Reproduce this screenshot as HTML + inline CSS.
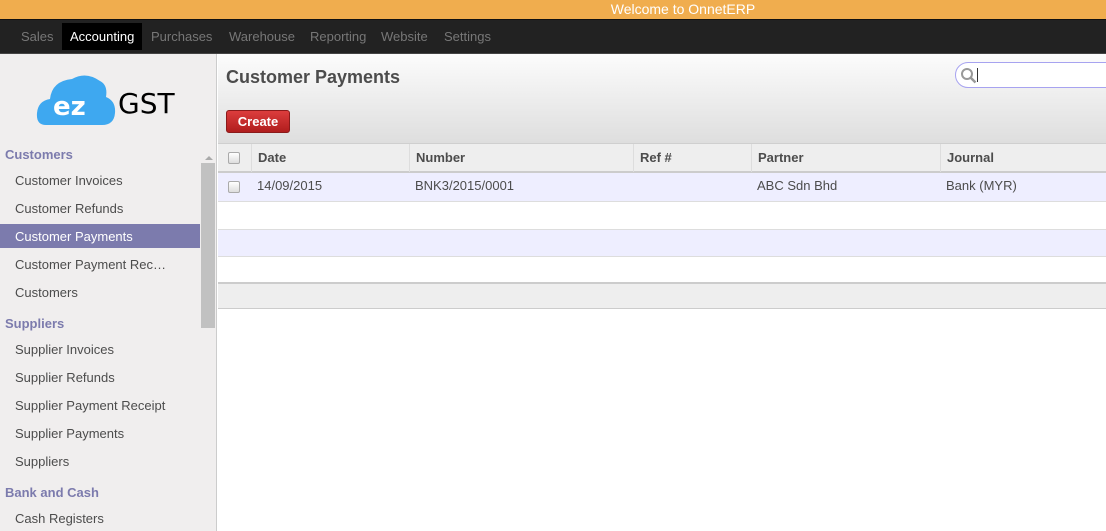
<!DOCTYPE html>
<html><head><style>
*{margin:0;padding:0;box-sizing:border-box}
body{width:1106px;height:531px;overflow:hidden;font-family:"Liberation Sans",Arial,sans-serif;font-size:13px;background:#fff;position:relative}
.top{position:absolute;left:0;top:0;width:1106px;height:20px;background:#f0ad4e;color:#fff;font-size:14px;text-align:center;line-height:19px;padding-left:260px;border-bottom:1px solid #111}
.nav{position:absolute;left:0;top:20px;width:1106px;height:34px;background:#222;border-bottom:1px solid #444}
.nav span{position:absolute;top:3px;height:27px;line-height:27px;color:#777;font-size:13px}
.nav .act{background:#000;color:#fff;padding:0 8px;left:62px}
.side{position:absolute;left:0;top:54px;width:217px;height:477px;background:#f0eeee;border-right:1px solid #ccc}
.side .it{position:absolute;left:15px;color:#4c4c4c;font-size:13px}
.side .h{position:absolute;left:5px;color:#7c7bad;font-weight:bold;font-size:13px}
.sel{position:absolute;left:0;width:200px;height:24px;background:#7c7bad}
.sb{position:absolute;left:201px;top:163px;width:14px;height:165px;background:#c1c1c1}
.hdr{position:absolute;left:218px;top:54px;width:888px;height:90px;background:linear-gradient(#fcfcfc,#dedede);border-bottom:1px solid #cfcfcf}
.hdr h1{position:absolute;left:8px;top:13px;font-size:18px;color:#4c4c4c}
.btn{position:absolute;left:8px;top:56px;width:64px;height:23px;background:linear-gradient(#dc3d3d,#b01d1d);border:1px solid #8a1a1a;border-radius:3px;color:#fff;font-weight:bold;font-size:13px;text-align:center;line-height:21px}
.srch{position:absolute;left:737px;top:8px;width:160px;height:26px;border:1px solid #a7a3f0;border-radius:13px 0 0 13px;background:#fff}
.row{position:absolute;left:218px;width:888px}
.cell{position:absolute;top:0;font-size:13px;color:#4c4c4c}
.cb{position:absolute;left:10px;width:12px;height:12px;border:1px solid #aaa;border-radius:2px;background:linear-gradient(#fff,#ddd)}
.th .cell{font-weight:bold;border-left:1px solid #ddd;height:28px;line-height:28px;padding-left:6px}
</style></head><body>
<div class="top">Welcome to OnnetERP</div>
<div class="nav">
<span style="left:21px">Sales</span><span class="act">Accounting</span><span style="left:151px">Purchases</span><span style="left:229px">Warehouse</span><span style="left:310px">Reporting</span><span style="left:381px">Website</span><span style="left:444px">Settings</span>
</div>
<div class="side">
<svg style="position:absolute;left:36px;top:19px" width="150" height="55" viewBox="0 0 150 55">
<path d="M10 52 Q0 52 1 40 Q2 28 14 26 Q16 8 36 6 Q50 -2 64 8 Q72 12 70 24 Q80 28 79 40 Q78 52 66 52 Z" fill="#3ea8f0"/>
<text x="17" y="42" fill="#fff" font-family="DejaVu Sans" font-weight="bold" font-size="26">ez</text>
<text x="82" y="40" fill="#000" font-family="DejaVu Sans" font-size="28">GST</text>
</svg>
<div class="h" style="top:93px">Customers</div>
<div class="it" style="top:119px">Customer Invoices</div>
<div class="it" style="top:147px">Customer Refunds</div>
<div class="sel" style="top:170px"></div>
<div class="it" style="top:175px;color:#fff">Customer Payments</div>
<div class="it" style="top:203px">Customer Payment Rec…</div>
<div class="it" style="top:231px">Customers</div>
<div class="h" style="top:262px">Suppliers</div>
<div class="it" style="top:288px">Supplier Invoices</div>
<div class="it" style="top:316px">Supplier Refunds</div>
<div class="it" style="top:344px">Supplier Payment Receipt</div>
<div class="it" style="top:372px">Supplier Payments</div>
<div class="it" style="top:400px">Suppliers</div>
<div class="h" style="top:431px">Bank and Cash</div>
<div class="it" style="top:457px">Cash Registers</div>
<div style="position:absolute;left:205px;top:98px;width:0;height:0;border:4px solid transparent;border-bottom:4px solid #aaa"></div>
</div>
<div class="sb"></div>
<div class="hdr"><h1>Customer Payments</h1><div class="btn">Create</div>
<div class="srch"><svg width="18" height="18" style="position:absolute;left:4px;top:4px"><circle cx="7" cy="7" r="5" stroke="#999" stroke-width="2" fill="none"/><path d="M10.5 10.5l5 5" stroke="#999" stroke-width="2.5"/></svg><div style="position:absolute;left:21px;top:5px;width:1px;height:14px;background:#333"></div></div>
</div>
<div class="row th" style="top:144px;height:29px;background:#eee;border-bottom:2px solid #ccc">
<div class="cb" style="top:8px"></div>
<div class="cell" style="left:33px">Date</div><div class="cell" style="left:191px">Number</div><div class="cell" style="left:415px">Ref #</div><div class="cell" style="left:533px">Partner</div><div class="cell" style="left:722px">Journal</div>
</div>
<div class="row" style="top:173px;height:29px;background:#eef;border-bottom:1px solid #ddd">
<div class="cb" style="top:8px"></div>
<div class="cell" style="left:39px;top:5px">14/09/2015</div><div class="cell" style="left:197px;top:5px">BNK3/2015/0001</div><div class="cell" style="left:539px;top:5px">ABC Sdn Bhd</div><div class="cell" style="left:728px;top:5px">Bank (MYR)</div>
</div>
<div class="row" style="top:202px;height:28px;background:#fff;border-bottom:1px solid #ddd"></div>
<div class="row" style="top:230px;height:27px;background:#eef;border-bottom:1px solid #ddd"></div>
<div class="row" style="top:257px;height:26px;background:#fff"></div>
<div class="row" style="top:282px;height:27px;background:#eee;border-top:2px solid #ccc;border-bottom:1px solid #ccc"></div>
</body></html>
